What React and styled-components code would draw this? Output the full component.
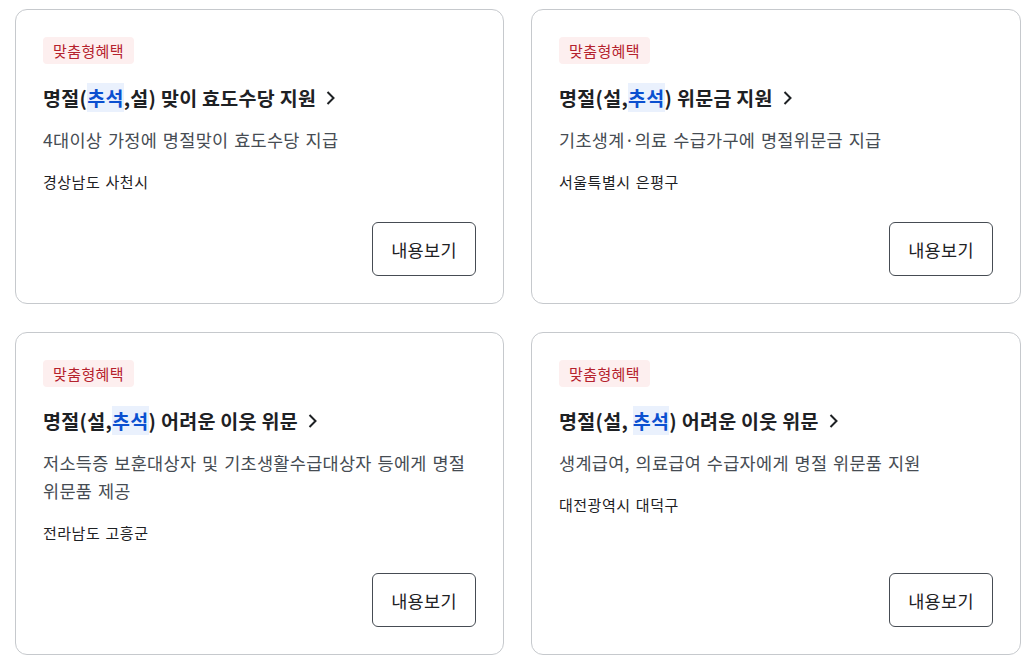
import styled, { createGlobalStyle } from "styled-components";

const GlobalStyle = createGlobalStyle`
  body {
    margin: 0;
    background: #fff;
    font-family: "Noto Sans CJK KR", "Noto Sans", sans-serif;
    color: #1e2124;
  }
`;

const Grid = styled.div`
  display: grid;
  grid-template-columns: 489px 490px;
  gap: 28px 27px;
  padding: 9px 0 0 15px;
`;

const Card = styled.div`
  display: flex;
  flex-direction: column;
  align-items: flex-start;
  padding: 27px;
  border: 1px solid #c6c9cd;
  border-radius: 12px;
`;

const Tag = styled.span`
  display: inline-flex;
  align-items: center;
  height: 27px;
  padding: 0 10px;
  border-radius: 4px;
  background: #fdefef;
  color: #b5222d;
  font-size: 15px;
  letter-spacing: 0.4px;
`;

const Title = styled.a`
  display: inline-flex;
  align-items: center;
  gap: 9px;
  margin-top: 20px;
  font-size: 19.5px;
  font-weight: 700;
  line-height: 28px;
  color: #1e2124;
  text-decoration: none;
  letter-spacing: 0.3px;
`;

const Mark = styled.mark`
  background: #eaf1fd;
  color: #0b50d0;
`;

const Desc = styled.p`
  margin: 14px 0 0;
  font-size: 17.5px;
  line-height: 28px;
  color: #464c53;
  letter-spacing: 0.3px;
  word-spacing: 1.5px;
`;

const Region = styled.div`
  margin-top: 17px;
  font-size: 15px;
  line-height: 22px;
  color: #1e2124;
  letter-spacing: 0.5px;
  word-spacing: 1.5px;
`;

const Footer = styled.div`
  margin-top: auto;
  padding-top: 29px;
  align-self: stretch;
  display: flex;
  justify-content: flex-end;
`;

const Button = styled.button`
  width: 104px;
  height: 54px;
  border: 1px solid #464c53;
  border-radius: 6px;
  background: #fff;
  font-family: inherit;
  font-size: 17.5px;
  letter-spacing: 0.3px;
  color: #1e2124;
  cursor: pointer;
`;

function Chevron() {
  return (
    <svg width="11" height="16" viewBox="0 0 11 16" fill="none">
      <path d="M2.5 2l6 6-6 6" stroke="#1e2124" strokeWidth="2" />
    </svg>
  );
}

const items = [
  {
    title: <>명절(<Mark>추석</Mark>,설) 맞이 효도수당 지원</>,
    desc: "4대이상 가정에 명절맞이 효도수당 지급",
    region: "경상남도 사천시",
  },
  {
    title: <>명절(설,<Mark>추석</Mark>) 위문금 지원</>,
    desc: "기초생계·의료 수급가구에 명절위문금 지급",
    region: "서울특별시 은평구",
  },
  {
    title: <>명절(설,<Mark>추석</Mark>) 어려운 이웃 위문</>,
    desc: "저소득증 보훈대상자 및 기초생활수급대상자 등에게 명절 위문품 제공",
    region: "전라남도 고흥군",
  },
  {
    title: <>명절(설, <Mark>추석</Mark>) 어려운 이웃 위문</>,
    desc: "생계급여, 의료급여 수급자에게 명절 위문품 지원",
    region: "대전광역시 대덕구",
  },
];

export default function App() {
  return (
    <>
      <GlobalStyle />
      <Grid>
        {items.map((item, i) => (
          <Card key={i}>
            <Tag>맞춤형혜택</Tag>
            <Title href="#">
              <span>{item.title}</span>
              <Chevron />
            </Title>
            <Desc>{item.desc}</Desc>
            <Region>{item.region}</Region>
            <Footer>
              <Button>내용보기</Button>
            </Footer>
          </Card>
        ))}
      </Grid>
    </>
  );
}
